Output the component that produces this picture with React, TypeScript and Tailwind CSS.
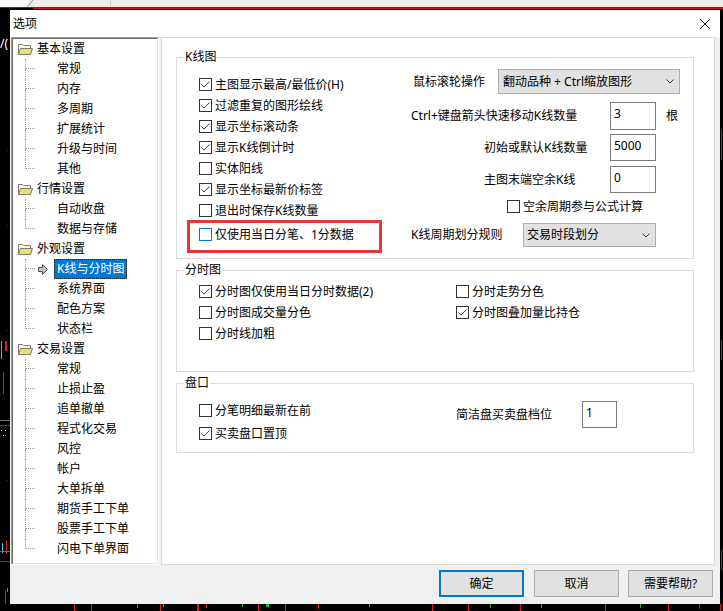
import React from 'react'

type Group = { label: string; children: string[] }

const tree: Group[] = [
  { label: '基本设置', children: ['常规', '内存', '多周期', '扩展统计', '升级与时间', '其他'] },
  { label: '行情设置', children: ['自动收盘', '数据与存储'] },
  { label: '外观设置', children: ['K线与分时图', '系统界面', '配色方案', '状态栏'] },
  {
    label: '交易设置',
    children: ['常规', '止损止盈', '追单撤单', '程式化交易', '风控', '帐户', '大单拆单', '期货手工下单', '股票手工下单', '闪电下单界面'],
  },
]

const Folder = () => (
  <svg width="16" height="13" viewBox="0 0 16 13">
    <path d="M1.5 11.5V1.5H5.5L6.5 2.5H13.5V11.5Z" fill="#fffbd2" stroke="#7d7d7d" />
    <path d="M1.5 11.5L3.5 5.5H15.5L13.5 11.5Z" fill="#efe06a" stroke="#7d7d7d" />
  </svg>
)

const Arrow = () => (
  <svg width="10" height="11" viewBox="0 0 10 11">
    <path d="M0.5 3.5H4.5V0.5L9.5 5.5L4.5 10.5V7.5H0.5Z" fill="#c4c4c4" stroke="#4a4a4a" />
  </svg>
)

const Chevron = () => (
  <svg width="8" height="5" viewBox="0 0 8 5">
    <path d="M0.5 0.5L4 4L7.5 0.5" fill="none" stroke="#333" />
  </svg>
)

const Box = ({ checked, focus }: { checked?: boolean; focus?: boolean }) => (
  <span
    className={
      focus
        ? 'w-[13px] h-[13px] shrink-0 border border-[#0078d7] bg-white flex items-center justify-center'
        : 'w-[13px] h-[13px] shrink-0 border border-[#333333] bg-white flex items-center justify-center'
    }
  >
    {checked && (
      <svg width="11" height="11" viewBox="0 0 11 11">
        <path d="M1.5 5.5L4 8L9.5 2.5" fill="none" stroke="#3c3c3c" />
      </svg>
    )}
  </span>
)

const CheckRow = ({ label, checked, focus, className = '' }: { label: string; checked?: boolean; focus?: boolean; className?: string }) => (
  <div className={`flex items-center h-[21px] ${className}`}>
    <Box checked={checked} focus={focus} />
    <span className="ml-[3px] whitespace-nowrap">{label}</span>
  </div>
)

const GroupTitle = ({ children }: { children: React.ReactNode }) => (
  <div className="-mt-[9px] ml-[7px] px-[1px] h-[16px] w-fit bg-white">{children}</div>
)

const Input = ({ value, w }: { value: string; w: string }) => (
  <div className={`${w} h-full border border-[#7a7a7a] bg-white pl-[3px] pt-[3px]`}>{value}</div>
)

const TreeView = () => (
  <div className="ml-[1px] w-[148px] h-full border-l border-t border-[#a0a0a0] border-r border-b border-r-white border-b-white">
    <div className="h-full border-l border-t border-[#696969] border-r border-b border-r-[#e3e3e3] border-b-[#e3e3e3] bg-white overflow-hidden">
      <div>
        {tree.map((g) => (
          <div key={g.label}>
            <div className="flex items-center h-[20px] pl-[4px]">
              <Folder />
              <span className="ml-[4px]">{g.label}</span>
            </div>
            {g.children.map((c, i) => {
              const last = i === g.children.length - 1
              const selected = c === 'K线与分时图'
              return (
                <div key={g.label + c} className="flex items-center h-[20px]">
                  <div className="w-[12px] shrink-0" />
                  <div className="w-[10px] h-[20px] shrink-0 flex flex-col">
                    <div className="h-[10px] border-l border-b border-dotted border-[#a0a0a0]" />
                    <div className={last ? 'h-[10px]' : 'h-[10px] border-l border-dotted border-[#a0a0a0]'} />
                  </div>
                  {selected ? (
                    <>
                      <div className="ml-[3px] w-[10px] flex items-center">
                        <Arrow />
                      </div>
                      <div className="ml-[6px] h-[20px] flex items-center px-[2px] border border-dotted border-[#222] bg-[#0078d7] text-white">
                        {c}
                      </div>
                    </>
                  ) : (
                    <>
                      <div className="w-[22px] shrink-0" />
                      <span>{c}</span>
                    </>
                  )}
                </div>
              )
            })}
          </div>
        ))}
      </div>
    </div>
  </div>
)

const KLineGroup = () => (
  <div className="relative ml-[14px] mt-[19px] w-[518px] h-[202px] border border-[#dcdcdc]">
    <GroupTitle>K线图</GroupTitle>
    <div className="flex">
      <div className="w-[234px] pl-[22px] mt-[9px]">
        <CheckRow label="主图显示最高/最低价(H)" checked />
        <CheckRow label="过滤重复的图形绘线" checked />
        <CheckRow label="显示坐标滚动条" checked />
        <CheckRow label="显示K线倒计时" checked />
        <CheckRow label="实体阳线" />
        <CheckRow label="显示坐标最新价标签" checked />
        <CheckRow label="退出时保存K线数量" />
        <CheckRow label="仅使用当日分笔、1分数据" focus className="mt-[3px]" />
      </div>
      <div className="mt-[4px] flex flex-col">
        <div className="flex items-center h-[25px]">
          <span className="w-[87px] pl-[2px]">鼠标滚轮操作</span>
          <div className="w-[182px] h-[25px] border border-[#adadad] bg-[#e1e1e1] flex items-center justify-between pl-[4px] pr-[5px]">
            <span className="whitespace-pre">翻动品种 + Ctrl缩放图形</span>
            <Chevron />
          </div>
        </div>
        <div className="flex items-center h-[28px] mt-[8px]">
          <span className="w-[199px] whitespace-nowrap">Ctrl+键盘箭头快速移动K线数量</span>
          <Input value="3" w="w-[46px]" />
          <span className="ml-[10px]">根</span>
        </div>
        <div className="flex items-center h-[27px] mt-[4px]">
          <span className="w-[199px] pl-[73px]">初始或默认K线数量</span>
          <Input value="5000" w="w-[46px]" />
        </div>
        <div className="flex items-center h-[27px] mt-[5px]">
          <span className="w-[199px] pl-[73px]">主图末端空余K线</span>
          <Input value="0" w="w-[46px]" />
        </div>
        <div className="flex items-center h-[13px] mt-[7px] pl-[96px]">
          <Box />
          <span className="ml-[3px]">空余周期参与公式计算</span>
        </div>
        <div className="flex items-center h-[24px] mt-[10px]">
          <span className="w-[112px]">K线周期划分规则</span>
          <div className="w-[133px] h-[24px] border border-[#adadad] bg-[#e1e1e1] flex items-center justify-between pl-[3px] pr-[5px]">
            <span>交易时段划分</span>
            <Chevron />
          </div>
        </div>
      </div>
    </div>
    <div className="absolute left-[10px] top-[162px] w-[195px] h-[33px] border-[3px] border-[#e8373c]" />
  </div>
)

const FenshiGroup = () => (
  <div className="ml-[14px] mt-[11px] w-[518px] h-[102px] border border-[#dcdcdc]">
    <GroupTitle>分时图</GroupTitle>
    <div className="flex mt-[3px]">
      <div className="w-[279px] pl-[22px]">
        <CheckRow label="分时图仅使用当日分时数据(2)" checked />
        <CheckRow label="分时图成交量分色" />
        <CheckRow label="分时线加粗" />
      </div>
      <div>
        <CheckRow label="分时走势分色" />
        <CheckRow label="分时图叠加量比持仓" checked />
      </div>
    </div>
  </div>
)

const PankouGroup = () => (
  <div className="ml-[14px] mt-[11px] w-[518px] h-[70px] border border-[#dcdcdc]">
    <GroupTitle>盘口</GroupTitle>
    <div className="flex">
      <div className="w-[279px] pl-[22px] mt-[9px]">
        <CheckRow label="分笔明细最新在前" />
        <CheckRow label="买卖盘口置顶" checked className="mt-[2px]" />
      </div>
      <div className="mt-[10px] flex items-center h-[27px]">
        <span className="w-[126px]">简洁盘买卖盘档位</span>
        <Input value="1" w="w-[35px]" />
      </div>
    </div>
  </div>
)

const Button = ({ label, primary, className = '' }: { label: string; primary?: boolean; className?: string }) => (
  <div
    className={
      primary
        ? `w-[85px] h-[27px] border-2 border-[#0078d7] bg-[#e1e1e1] flex items-center justify-center ${className}`
        : `w-[85px] h-[27px] border border-[#adadad] bg-[#e1e1e1] flex items-center justify-center ${className}`
    }
  >
    {label}
  </div>
)

export default function App() {
  return (
    <div className="w-[723px] h-[611px] bg-black overflow-hidden flex flex-col font-['Noto_Sans','Noto_Sans_CJK_SC',sans-serif] text-[12px] leading-[16px] text-black">
      <svg width="723" height="10" className="block shrink-0">
        <rect x="0" y="0" width="723" height="7" fill="#ececec" />
        <rect x="0" y="0" width="29" height="7" fill="#fafafa" />
        <path d="M27 7L33 0" stroke="#9a9a9a" />
        <rect x="110" y="0" width="1" height="6" fill="#d0d0d0" />
        <rect x="0" y="7" width="723" height="1" fill="#3a3a3a" />
        <rect x="33" y="8" width="690" height="1" fill="#c81818" />
      </svg>
      <div className="flex">
        <div className="w-[10px] h-[594px] relative shrink-0">
          <span className="absolute left-0 top-[26px] text-white text-[12px] leading-[16px]">/(</span>
          <svg width="10" height="594" className="block">
            <rect x="7" y="140" width="1" height="1" fill="#7a1010" />
            <rect x="7" y="215" width="1" height="1" fill="#7a1010" />
            <rect x="7" y="320" width="1" height="1" fill="#7a1010" />
            <rect x="1" y="331" width="1" height="18" fill="#2fd0e0" />
            <rect x="5" y="331" width="2" height="10" fill="#e01818" />
            <rect x="3" y="362" width="1" height="22" fill="#e01818" />
            <rect x="0" y="410" width="10" height="1" fill="#707070" />
            <rect x="0" y="415" width="10" height="1" fill="#d01010" />
            <rect x="1" y="420" width="1" height="1" fill="#fff" />
            <rect x="5" y="420" width="1" height="1" fill="#fff" />
            <rect x="3" y="425" width="1" height="1" fill="#fff" />
            <rect x="7" y="470" width="1" height="1" fill="#7a1010" />
            <rect x="2" y="533" width="1" height="10" fill="#2fd0e0" />
            <rect x="6" y="530" width="1" height="14" fill="#e01818" />
            <rect x="0" y="541" width="10" height="1" fill="#a040c0" />
            <rect x="0" y="551" width="10" height="1" fill="#c01010" />
            <rect x="5" y="580" width="1" height="14" fill="#e01818" />
            <rect x="7" y="578" width="1" height="4" fill="#20c020" />
          </svg>
        </div>
        <div className="w-[710px] h-[594px] shrink-0 flex flex-col bg-[#f0f0f0]">
          <div className="h-[27px] bg-white flex items-center justify-between pl-[3px] pr-[10px]">
            <span>选项</span>
            <svg width="10" height="10" viewBox="0 0 10 10">
              <path d="M0 0L10 10M10 0L0 10" stroke="#111" strokeWidth="1" />
            </svg>
          </div>
          <div className="h-[528px] flex">
            <TreeView />
            <div className="ml-[2px] w-[554px] h-full border border-[#d9d9d9] bg-white">
              <KLineGroup />
              <FenshiGroup />
              <PankouGroup />
            </div>
          </div>
          <div className="h-[39px] flex justify-end pt-[5px] pr-[7px]">
            <Button label="确定" primary />
            <Button label="取消" className="ml-[10px]" />
            <Button label="需要帮助?" className="ml-[9px]" />
          </div>
        </div>
        <svg width="3" height="594" className="block shrink-0">
          <rect x="1" y="120" width="1" height="30" fill="#c01010" />
          <rect x="1" y="330" width="1" height="20" fill="#c01010" />
          <rect x="1" y="540" width="1" height="20" fill="#c01010" />
        </svg>
      </div>
      <svg width="723" height="7" className="block shrink-0">
        <rect x="74" y="0" width="1" height="7" fill="#e01818" />
        <rect x="91" y="0" width="1" height="7" fill="#e01818" />
        <rect x="137" y="0" width="1" height="4" fill="#20c020" />
        <rect x="160" y="0" width="1" height="7" fill="#e01818" />
        <rect x="163" y="0" width="1" height="3" fill="#20c020" />
        <rect x="197" y="0" width="2" height="7" fill="#e01818" />
        <rect x="206" y="0" width="1" height="4" fill="#e01818" />
        <rect x="242" y="0" width="1" height="3" fill="#20c020" />
        <rect x="258" y="0" width="1" height="7" fill="#e01818" />
        <rect x="266" y="0" width="3" height="3" fill="#20c020" />
        <rect x="285" y="0" width="1" height="7" fill="#e01818" />
        <rect x="318" y="0" width="1" height="5" fill="#e01818" />
        <rect x="369" y="0" width="1" height="3" fill="#20c020" />
        <rect x="432" y="0" width="1" height="7" fill="#e01818" />
        <rect x="468" y="0" width="1" height="7" fill="#e01818" />
        <rect x="490" y="0" width="1" height="4" fill="#20c020" />
        <rect x="520" y="0" width="1" height="7" fill="#e01818" />
        <rect x="541" y="0" width="1" height="4" fill="#20c020" />
        <rect x="605" y="0" width="1" height="7" fill="#e01818" />
        <rect x="640" y="0" width="1" height="4" fill="#20c020" />
        <rect x="668" y="0" width="1" height="7" fill="#e01818" />
        <rect x="699" y="0" width="1" height="5" fill="#e01818" />
        <rect x="720" y="0" width="1" height="7" fill="#e01818" />
      </svg>
    </div>
  )
}
